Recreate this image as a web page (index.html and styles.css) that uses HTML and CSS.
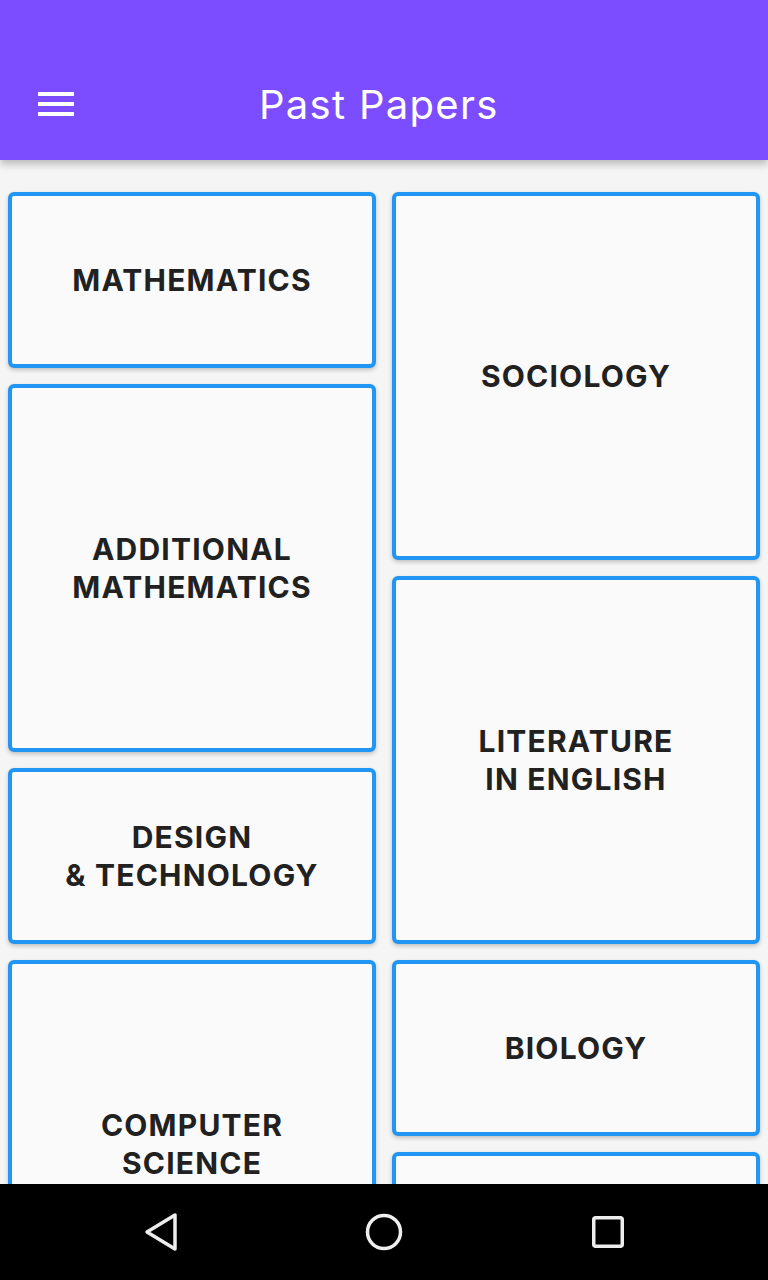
FILE: index.html
```html
<!DOCTYPE html>
<html lang="en">
<head>
  <meta charset="UTF-8" />
  <meta name="viewport" content="width=device-width, initial-scale=1.0"/>
  <title>Past Papers</title>
  <link rel="stylesheet" href="styles.css">
</head>
<body>

  <header class="app-bar">
    <div class="menu-btn">
      <span></span>
      <span></span>
      <span></span>
    </div>
    <h1>Past Papers</h1>
  </header>

  <main class="subjects">
    <div class="col">
      <div class="card short">MATHEMATICS</div>
      <div class="card tall">ADDITIONAL<br>MATHEMATICS</div>
      <div class="card short">DESIGN<br>&amp; TECHNOLOGY</div>
      <div class="card tall">COMPUTER<br>SCIENCE</div>
    </div>
    <div class="col">
      <div class="card tall">SOCIOLOGY</div>
      <div class="card tall">LITERATURE<br>IN ENGLISH</div>
      <div class="card short">BIOLOGY</div>
      <div class="card short"></div>
    </div>
  </main>

  <nav class="nav-bar">
    <svg width="40" height="40" viewBox="0 0 40 40">
      <path d="M35 3 L35 37 L7 20 Z" fill="none" stroke="#eee" stroke-width="3.5" stroke-linejoin="round"/>
    </svg>
    <svg width="40" height="40" viewBox="0 0 40 40">
      <circle cx="20" cy="20" r="16.5" fill="none" stroke="#eee" stroke-width="3.5"/>
    </svg>
    <svg width="40" height="40" viewBox="0 0 40 40">
      <rect x="5.75" y="5.75" width="28.5" height="28.5" rx="2" fill="none" stroke="#eee" stroke-width="3.5"/>
    </svg>
  </nav>

</body>
</html>
```

FILE: styles.css
```css
* { box-sizing: border-box; }

body {
  margin: 0;
  width: 768px;
  height: 1280px;
  overflow: hidden;
  background: #f5f5f5;
  font-family: 'Inter', 'Liberation Sans', sans-serif;
  color: #212121;
  display: flex;
  flex-direction: column;
}

.app-bar {
  height: 160px;
  flex-shrink: 0;
  background: #7c4dff;
  display: flex;
  align-items: center;
  padding: 48px 0 0 38px;
  box-shadow: 0 4px 8px rgba(0,0,0,0.25);
  position: relative;
  z-index: 1;
}

.menu-btn {
  width: 36px;
  display: flex;
  flex-direction: column;
  gap: 6px;
}

.menu-btn span {
  display: block;
  height: 4px;
  background: #fff;
}

.app-bar h1 {
  margin: 0 0 0 185px;
  color: #fff;
  font-weight: 400;
  font-size: 40px;
  letter-spacing: 1.3px;
}

.subjects {
  flex: 1;
  overflow: hidden;
  display: flex;
  gap: 16px;
  padding: 32px 8px 0;
}

.col {
  flex: 1;
  display: flex;
  flex-direction: column;
  gap: 16px;
}

.card {
  flex-shrink: 0;
  background: #fafafa;
  border: 4px solid #2196f3;
  border-radius: 6px;
  box-shadow: 0 2px 4px rgba(0,0,0,0.22);
  display: flex;
  align-items: center;
  justify-content: center;
  text-align: center;
  font-weight: 700;
  font-size: 30px;
  line-height: 38px;
  letter-spacing: 1.2px;
}

.card.short { height: 176px; }
.card.tall { height: 368px; }

.nav-bar {
  height: 96px;
  flex-shrink: 0;
  background: #000;
  display: flex;
  align-items: center;
  justify-content: center;
  gap: 184px;
}
```
